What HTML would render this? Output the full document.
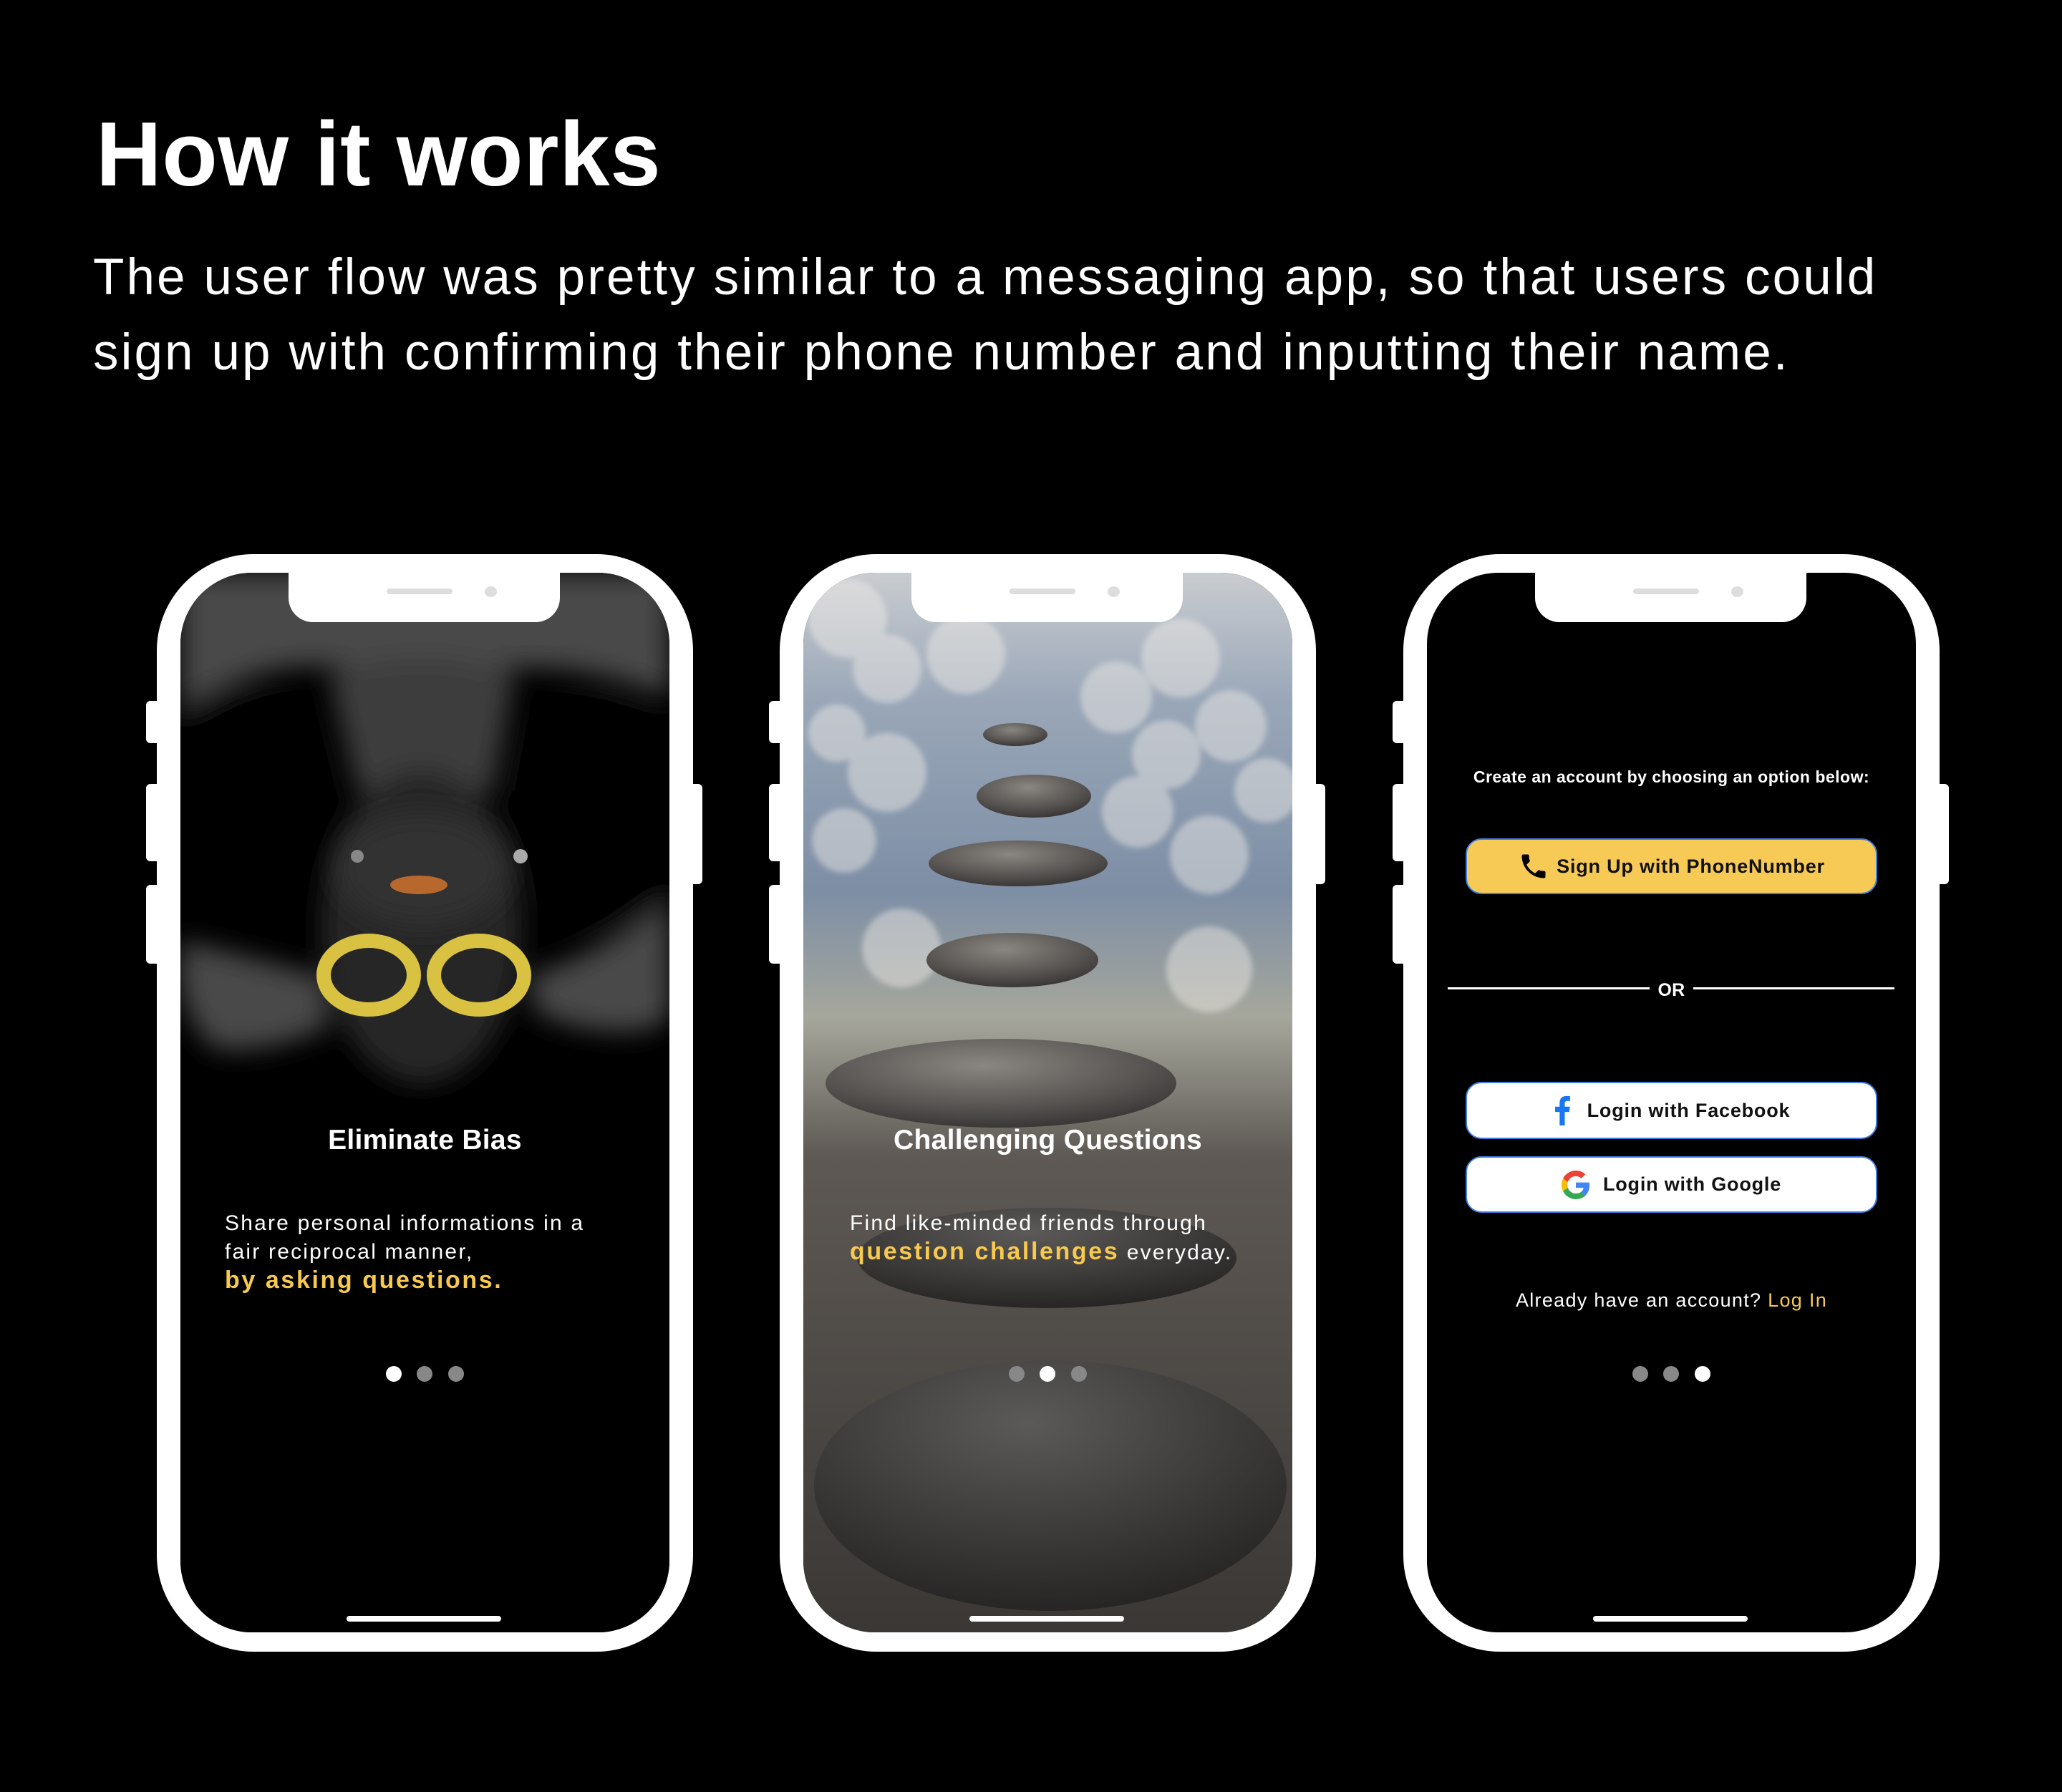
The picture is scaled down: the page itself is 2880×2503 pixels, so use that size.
<!DOCTYPE html>
<html><head><meta charset="utf-8">
<style>
*{margin:0;padding:0;box-sizing:border-box}
body{width:2880px;height:2503px;background:#000;position:relative;overflow:hidden;font-family:"Liberation Sans",sans-serif;color:#fff}
h1{position:absolute;left:134px;top:152px;font-size:127px;font-weight:bold;line-height:1;white-space:nowrap;letter-spacing:0.5px}
.p{position:absolute;left:130px;font-size:71px;font-weight:normal;white-space:nowrap;letter-spacing:3.1px;line-height:1}
.phone{position:absolute;top:774px;width:749px;height:1533px;background:#fff;border-radius:135px}
.screen{position:absolute;left:33px;top:26px;width:683px;height:1480px;border-radius:100px;overflow:hidden;background:#000}
.notch{position:absolute;left:184px;top:0;width:379px;height:95px;background:#fff;border-radius:0 0 34px 34px}
.spk{position:absolute;left:321px;top:48px;width:92px;height:8px;border-radius:4px;background:#ddd}
.cam{position:absolute;left:458px;top:45px;width:17px;height:15px;border-radius:50%;background:#ddd}
.btnL{position:absolute;left:-15px;width:15px;background:#fff;border-radius:6px 0 0 6px}
.btnR{position:absolute;right:-13px;top:321px;height:140px;width:13px;background:#fff;border-radius:0 6px 6px 0}
.home{position:absolute;left:265px;top:1483px;width:216px;height:8px;border-radius:4px;background:#fff}
.t{position:absolute;left:0;width:749px;text-align:center;font-weight:bold;font-size:39px;letter-spacing:0.3px;line-height:1}
.body{position:absolute;font-size:30px;letter-spacing:2.2px;line-height:40px;white-space:nowrap}
.y{color:#f7c94f;font-weight:bold;font-size:34px;letter-spacing:2.6px;line-height:38px}
.dot{position:absolute;top:1134px;width:22px;height:22px;border-radius:50%;background:#888}
.dot.w{background:#fff}
.b{position:absolute;left:87px;width:575px;border-radius:22px;border:2px solid #3d7fe6;display:flex;align-items:center;justify-content:center;font-size:27px;font-weight:bold;color:#111;letter-spacing:0.8px}
</style></head><body>
<h1>How it works</h1>
<div class="p" style="top:352px">The user flow was pretty similar to a messaging app, so that users could</div>
<div class="p" style="top:457px">sign up with confirming their phone number and inputting their name.</div>

<!-- Phone 1 -->
<div class="phone" style="left:219px">
 <div class="btnL" style="top:205px;height:59px"></div>
 <div class="btnL" style="top:321px;height:108px"></div>
 <div class="btnL" style="top:462px;height:110px"></div>
 <div class="btnR"></div>
 <div class="screen">
  <svg width="683" height="1480" viewBox="33 26 683 1480" style="position:absolute;left:0;top:0">
   <defs>
    <filter id="bl" x="-20%" y="-20%" width="140%" height="140%"><feGaussianBlur stdDeviation="18"/></filter>
    <filter id="bl2"><feGaussianBlur stdDeviation="6"/></filter>
   </defs>
   <rect x="33" y="26" width="683" height="1480" fill="#000"/>
   <g filter="url(#bl)">
    <path d="M33 26 H716 V200 Q600 150 480 160 Q380 240 270 160 Q150 140 33 220 Z" fill="#4a4a4a"/>
    <path d="M240 170 Q370 120 500 170 L470 330 Q370 360 280 330 Z" fill="#3c3c3c"/>
    <ellipse cx="370" cy="520" rx="140" ry="220" fill="#262626"/>
    <ellipse cx="120" cy="330" rx="110" ry="140" fill="#050505"/>
    <ellipse cx="620" cy="360" rx="120" ry="160" fill="#050505"/>
    <path d="M33 540 Q120 560 230 590 L240 660 Q150 700 80 690 Q40 650 33 600Z" fill="#4a4a4a"/>
    <path d="M716 480 Q640 550 520 590 L530 640 Q620 680 700 660 L716 640Z" fill="#4a4a4a"/>
   </g>
   <ellipse cx="370" cy="440" rx="120" ry="80" fill="#333" filter="url(#bl)"/>
   <ellipse cx="366" cy="462" rx="40" ry="13" fill="#b8682c"/>
   <circle cx="280" cy="422" r="9" fill="#888"/>
   <circle cx="508" cy="422" r="10" fill="#aaa"/>
   <g fill="none" stroke="#d9c241" stroke-width="20">
    <ellipse cx="296" cy="588" rx="63" ry="48"/>
    <ellipse cx="450" cy="588" rx="63" ry="48"/>
   </g>
  </svg>
 </div>
 <div class="notch"></div><div class="spk"></div><div class="cam"></div>
 <div class="t" style="top:799px">Eliminate Bias</div>
 <div class="body" style="left:95px;top:915px">Share personal informations in a<br>fair reciprocal manner,<br><span class="y">by asking questions.</span></div>
 <div class="dot w" style="left:320px"></div><div class="dot" style="left:363px"></div><div class="dot" style="left:407px"></div>
 <div class="home"></div>
</div>

<!-- Phone 2 -->
<div class="phone" style="left:1089px">
 <div class="btnL" style="top:205px;height:59px"></div>
 <div class="btnL" style="top:321px;height:108px"></div>
 <div class="btnL" style="top:462px;height:110px"></div>
 <div class="btnR"></div>
 <div class="screen">
  <svg width="683" height="1480" viewBox="33 26 683 1480" style="position:absolute;left:0;top:0">
   <defs>
    <linearGradient id="bg2" x1="0" y1="0" x2="0" y2="1">
     <stop offset="0" stop-color="#c9ccd0"/><stop offset="0.12" stop-color="#9aa7b8"/><stop offset="0.3" stop-color="#7d8ea5"/><stop offset="0.42" stop-color="#a6a79c"/><stop offset="0.55" stop-color="#5e5954"/><stop offset="1" stop-color="#3a3735"/>
    </linearGradient>
    <filter id="b3"><feGaussianBlur stdDeviation="4"/></filter>
    <radialGradient id="st" cx="0.45" cy="0.3" r="0.8"><stop offset="0" stop-color="#8a8680"/><stop offset="0.6" stop-color="#555250"/><stop offset="1" stop-color="#2e2c2b"/></radialGradient>
    <radialGradient id="st2" cx="0.45" cy="0.25" r="0.8"><stop offset="0" stop-color="#5c5a58"/><stop offset="1" stop-color="#232221"/></radialGradient>
   </defs>
   <rect x="33" y="26" width="683" height="1480" fill="url(#bg2)"/>
   <g fill="#f2eee8" opacity="0.45" filter="url(#b3)">
    <circle cx="95" cy="90" r="55"/><circle cx="150" cy="160" r="48"/><circle cx="260" cy="140" r="55"/><circle cx="560" cy="145" r="55"/><circle cx="630" cy="240" r="50"/><circle cx="150" cy="305" r="55"/><circle cx="90" cy="400" r="45"/><circle cx="600" cy="420" r="55"/><circle cx="500" cy="360" r="50"/><circle cx="680" cy="330" r="45"/><circle cx="170" cy="550" r="55"/><circle cx="600" cy="580" r="60"/><circle cx="470" cy="200" r="50"/><circle cx="540" cy="280" r="48"/><circle cx="80" cy="250" r="40"/>
   </g>
   <ellipse cx="378" cy="1301" rx="330" ry="175" fill="url(#st2)"/>
   <ellipse cx="373" cy="983" rx="265" ry="70" fill="url(#st2)"/>
   <ellipse cx="309" cy="739" rx="245" ry="62" fill="url(#st)"/>
   <ellipse cx="325" cy="567" rx="120" ry="38" fill="url(#st)"/>
   <ellipse cx="333" cy="432" rx="125" ry="32" fill="url(#st)"/>
   <ellipse cx="355" cy="338" rx="80" ry="30" fill="url(#st)"/>
   <ellipse cx="329" cy="252" rx="45" ry="16" fill="url(#st)"/>
  </svg>
 </div>
 <div class="notch"></div><div class="spk"></div><div class="cam"></div>
 <div class="t" style="top:799px">Challenging Questions</div>
 <div class="body" style="left:98px;top:915px">Find like-minded friends through<br><span class="y">question challenges</span> everyday.</div>
 <div class="dot" style="left:320px"></div><div class="dot w" style="left:363px"></div><div class="dot" style="left:407px"></div>
 <div class="home"></div>
</div>

<!-- Phone 3 -->
<div class="phone" style="left:1960px">
 <div class="btnL" style="top:205px;height:59px"></div>
 <div class="btnL" style="top:321px;height:108px"></div>
 <div class="btnL" style="top:462px;height:110px"></div>
 <div class="btnR"></div>
 <div class="screen"></div>
 <div class="notch"></div><div class="spk"></div><div class="cam"></div>
 <div class="t" style="top:300px;font-size:23px;letter-spacing:0.5px">Create an account by choosing an option below:</div>
 <div class="b" style="top:397px;height:78px;background:#f7c955">
  <svg width="44" height="44" viewBox="0 0 24 24" style="margin-right:10px"><path fill="#000" d="M6.6 10.8c1.4 2.8 3.8 5.1 6.6 6.6l2.2-2.2c.3-.3.7-.4 1-.2 1.1.4 2.300.6 3.6.6.6 0 1 .4 1 1V20c0 .6-.4 1-1 1C10.6 21 3 13.4 3 4c0-.6.4-1 1-1h3.5c.6 0 1 .4 1 1 0 1.3.2 2.5.6 3.6.1.3 0 .7-.2 1L6.6 10.8z"/></svg>
  Sign Up with PhoneNumber</div>
 <div style="position:absolute;left:62px;top:605px;width:282px;height:3px;background:#fff"></div>
 <div style="position:absolute;left:405px;top:605px;width:281px;height:3px;background:#fff"></div>
 <div class="t" style="top:597px;font-size:25px">OR</div>
 <div class="b" style="top:737px;height:80px;background:#fff">
  <svg width="26" height="42" viewBox="0 0 13 24" style="margin-right:22px"><path fill="#1877f2" d="M8.5 24V13.2h3.6l.5-4.2H8.5V6.4c0-1.2.3-2 2.1-2h2.2V.7C12.4.6 11.1.5 9.7.5 6.6.5 4.4 2.4 4.4 5.9V9H.8v4.2h3.6V24z"/></svg>
  Login with Facebook</div>
 <div class="b" style="top:841px;height:79px;background:#fff">
  <svg width="40" height="40" viewBox="0 0 48 48" style="margin-right:18px">
   <path fill="#EA4335" d="M24 9.5c3.5 0 6.6 1.2 9.1 3.6l6.8-6.8C35.8 2.4 30.2 0 24 0 14.6 0 6.6 5.4 2.6 13.2l7.9 6.2C12.4 13.7 17.7 9.5 24 9.5z"/>
   <path fill="#4285F4" d="M46.9 24.5c0-1.6-.1-3.1-.4-4.5H24v9h12.9c-.6 3-2.3 5.5-4.8 7.2l7.7 6c4.5-4.2 7.1-10.3 7.1-17.7z"/>
   <path fill="#FBBC05" d="M10.5 28.6c-.5-1.4-.8-3-.8-4.6s.3-3.2.8-4.6l-7.9-6.2C.9 16.5 0 20.1 0 24s.9 7.5 2.6 10.8l7.9-6.2z"/>
   <path fill="#34A853" d="M24 48c6.5 0 11.9-2.1 15.9-5.8l-7.7-6c-2.2 1.5-5 2.3-8.2 2.3-6.3 0-11.6-4.2-13.5-9.9l-7.9 6.2C6.6 42.6 14.6 48 24 48z"/>
  </svg>
  Login with Google</div>
 <div class="t" style="top:1029px;font-size:27px;font-weight:normal;letter-spacing:1.3px">Already have an account? <span style="color:#f7c94f">Log In</span></div>
 <div class="dot" style="left:320px"></div><div class="dot" style="left:363px"></div><div class="dot w" style="left:407px"></div>
 <div class="home"></div>
</div>
</body></html>
